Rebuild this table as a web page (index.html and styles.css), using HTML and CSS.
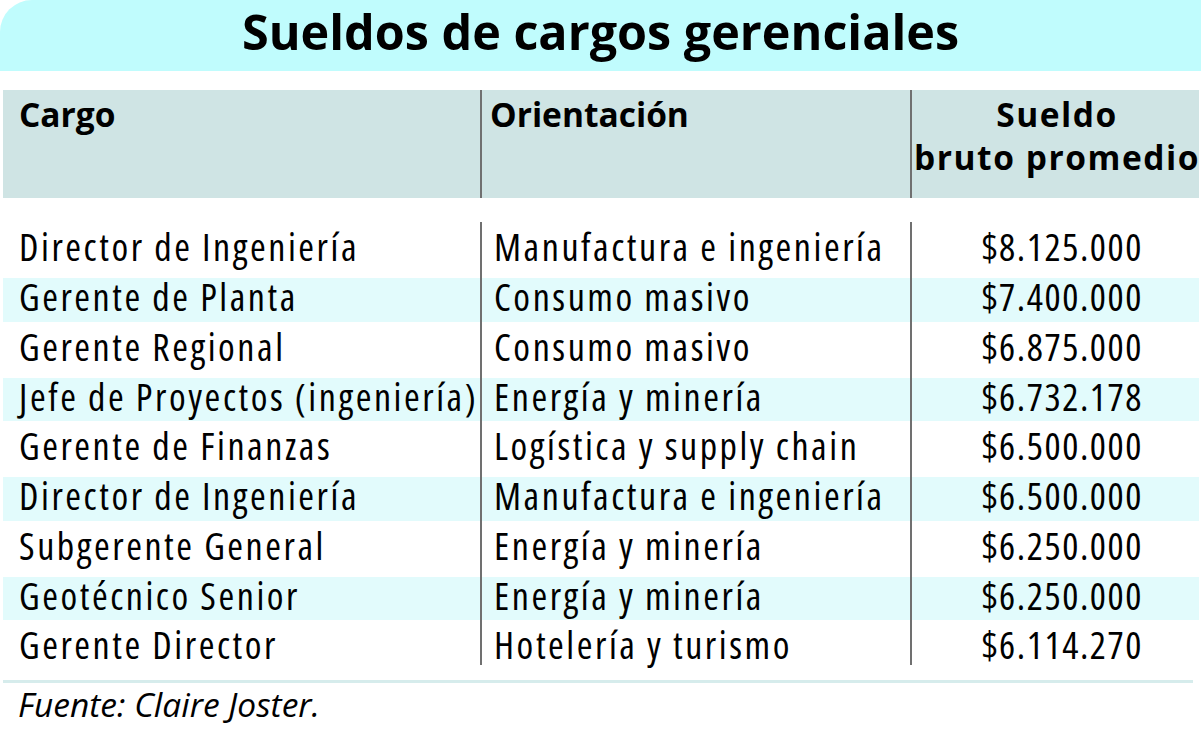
FILE: index.html
```html
<!DOCTYPE html>
<html lang="es">
<head>
<meta charset="utf-8">
<title>Sueldos de cargos gerenciales</title>
<link rel="stylesheet" href="styles.css">
</head>
<body>
<div class="page">
  <h1 class="banner">Sueldos de cargos gerenciales</h1>
  <div class="table">
    <div class="row head">
      <div class="cell c1">Cargo</div>
      <div class="cell c2">Orientación</div>
      <div class="cell c3">Sueldo<br>bruto promedio</div>
    </div>
    <div class="row first">
      <div class="cell c1">Director de Ingeniería</div>
      <div class="cell c2">Manufactura e ingeniería</div>
      <div class="cell c3">$8.125.000</div>
    </div>
    <div class="row band">
      <div class="cell c1">Gerente de Planta</div>
      <div class="cell c2">Consumo masivo</div>
      <div class="cell c3">$7.400.000</div>
    </div>
    <div class="row">
      <div class="cell c1">Gerente Regional</div>
      <div class="cell c2">Consumo masivo</div>
      <div class="cell c3">$6.875.000</div>
    </div>
    <div class="row band">
      <div class="cell c1">Jefe de Proyectos (ingeniería)</div>
      <div class="cell c2">Energía y minería</div>
      <div class="cell c3">$6.732.178</div>
    </div>
    <div class="row">
      <div class="cell c1">Gerente de Finanzas</div>
      <div class="cell c2">Logística y supply chain</div>
      <div class="cell c3">$6.500.000</div>
    </div>
    <div class="row band">
      <div class="cell c1">Director de Ingeniería</div>
      <div class="cell c2">Manufactura e ingeniería</div>
      <div class="cell c3">$6.500.000</div>
    </div>
    <div class="row">
      <div class="cell c1">Subgerente General</div>
      <div class="cell c2">Energía y minería</div>
      <div class="cell c3">$6.250.000</div>
    </div>
    <div class="row band">
      <div class="cell c1">Geotécnico Senior</div>
      <div class="cell c2">Energía y minería</div>
      <div class="cell c3">$6.250.000</div>
    </div>
    <div class="row last">
      <div class="cell c1">Gerente Director</div>
      <div class="cell c2">Hotelería y turismo</div>
      <div class="cell c3">$6.114.270</div>
    </div>
  </div>
  <div class="rule"></div>
  <p class="source">Fuente: Claire Joster.</p>
</div>
</body>
</html>
```

FILE: styles.css
```css
* { box-sizing: border-box; }

html, body {
  margin: 0;
  padding: 0;
  background: #ffffff;
}

body {
  font-family: "Open Sans", "Noto Sans", sans-serif;
  color: #000000;
  width: 1201px;
  height: 738px;
  overflow: hidden;
}

.page {
  width: 1201px;
}

.banner {
  margin: 0;
  height: 71px;
  background: #c0fcfd;
  border-top-left-radius: 32px;
  text-align: center;
  font-size: 48.5px;
  font-weight: 700;
  line-height: 62px;
}

.table {
  margin: 19px 2px 0 3px;
}

.row {
  display: grid;
  grid-template-columns: 477px 430px 1fr;
  height: 49.75px;
  font-size: 38px;
  font-stretch: 75%;
  letter-spacing: 2.55px;
  line-height: 49.75px;
}

.row.first {
  height: 74.15px;
  padding-top: 24.4px;
}

.row.band {
  background: linear-gradient(to bottom, transparent 0 6px, #e2fbfc 6px 100%);
}

.cell {
  white-space: nowrap;
}

.c1 {
  padding-left: 16px;
}

.c2,
.c3 {
  background: linear-gradient(#707070, #707070) 0 0 / 2px 100% no-repeat;
}

.c2 {
  padding-left: 14px;
}

.c3 {
  text-align: right;
  padding-right: 56px;
  letter-spacing: 1.55px;
}

.last .c2,
.last .c3 {
  background-size: 2px 45px;
}

.row.head {
  height: 108px;
  background: #cfe4e4;
  font-weight: 700;
  font-size: 33.5px;
  font-stretch: 100%;
  letter-spacing: 0;
  line-height: 43px;
}

.head .cell {
  padding-top: 3px;
}

.head .c1 {
  padding-left: 16px;
}

.head .c2 {
  padding-left: 10px;
}

.head .c3 {
  text-align: center;
  padding-right: 0;
  padding-left: 4px;
}

.rule {
  margin: 10px 8px 0 3px;
  height: 3px;
  background: #d6ecec;
}

.source {
  margin: 1px 0 0 18px;
  font-size: 33.5px;
  font-style: italic;
  line-height: 40px;
}
```
